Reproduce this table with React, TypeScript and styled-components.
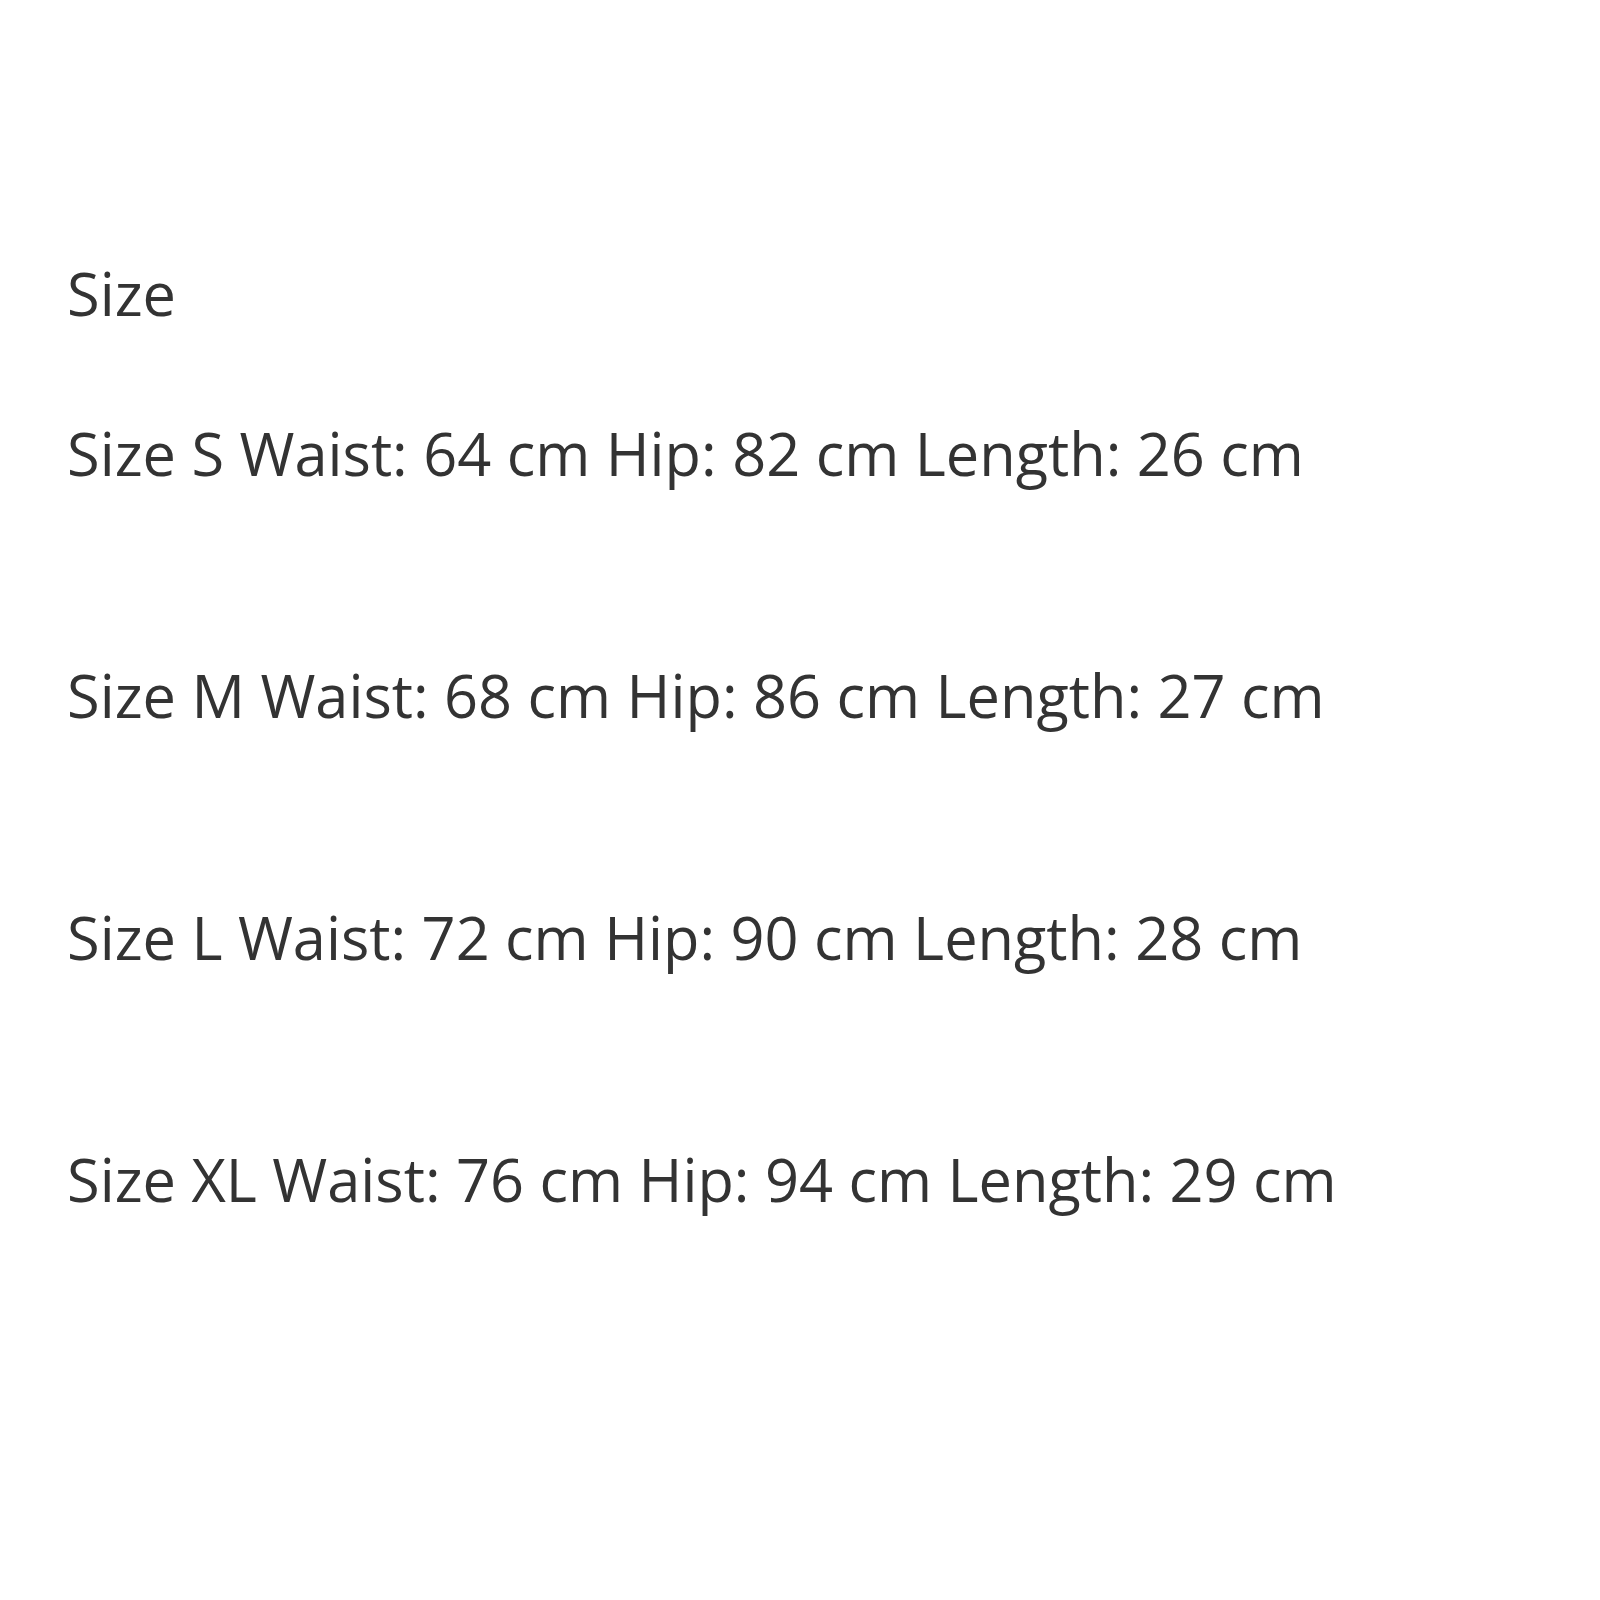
import React from "react";
import styled, { createGlobalStyle } from "styled-components";

const GlobalStyle = createGlobalStyle`
  html, body {
    margin: 0;
    padding: 0;
    background: #fff;
  }
`;

const Page = styled.div`
  width: 1600px;
  height: 1600px;
  box-sizing: border-box;
  padding: 259px 0 0 67px;
  font-family: "Open Sans", "Liberation Sans", sans-serif;
  color: #333;
`;

const Title = styled.div`
  font-size: 59.5px;
  line-height: 68px;
  margin-bottom: 92px;
`;

const List = styled.div`
  display: flex;
  flex-direction: column;
  gap: 174px;
`;

const Row = styled.div`
  font-size: 59.5px;
  line-height: 68px;
  white-space: nowrap;
`;

const sizes = [
  { name: "S", waist: 64, hip: 82, length: 26 },
  { name: "M", waist: 68, hip: 86, length: 27 },
  { name: "L", waist: 72, hip: 90, length: 28 },
  { name: "XL", waist: 76, hip: 94, length: 29 },
];

const App: React.FC = () => (
  <>
    <GlobalStyle />
    <Page>
      <Title>Size</Title>
      <List>
        {sizes.map((s) => (
          <Row key={s.name}>
            Size {s.name} Waist: {s.waist} cm Hip: {s.hip} cm Length: {s.length} cm
          </Row>
        ))}
      </List>
    </Page>
  </>
);

export default App;
